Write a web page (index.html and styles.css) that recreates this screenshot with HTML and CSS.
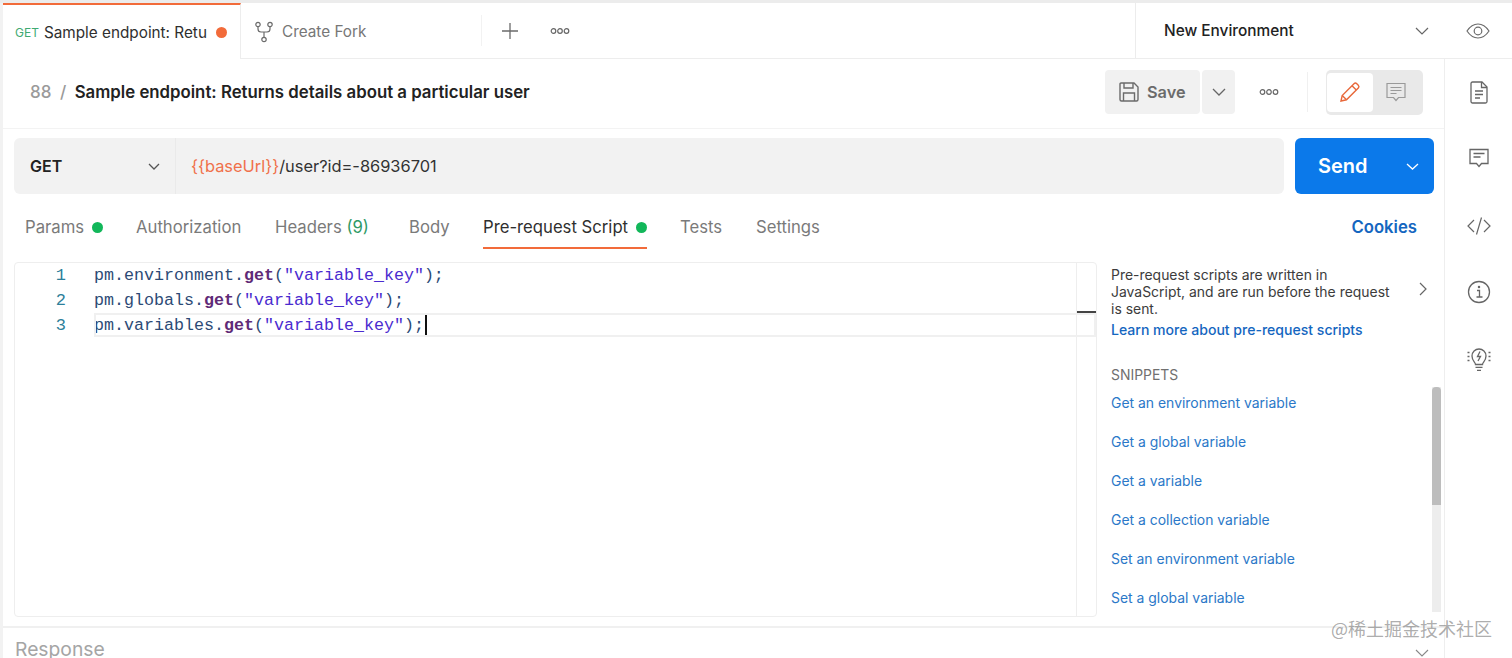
FILE: index.html
```html
<!DOCTYPE html>
<html lang="en">
<head>
<meta charset="utf-8">
<title>Sample endpoint</title>
<link rel="stylesheet" href="styles.css">
</head>
<body>
<div class="app">
  <main class="main">
    <div class="tabbar">
      <div class="tab active"><span class="get">GET</span><span class="tab-name">Sample endpoint: Retu</span><span class="unsaved"></span></div>
      <div class="tab fork">
        <svg class="ico" width="20" height="22" viewBox="0 0 20 22" fill="none" stroke="#6b6b6b" stroke-width="1.2"><circle cx="4" cy="3.5" r="2.2"/><circle cx="16" cy="3.5" r="2.2"/><circle cx="10" cy="18.5" r="2.2"/><path d="M4 5.7V8c0 2 1.5 3 3 3h6c1.5 0 3-1 3-3V5.7M10 11v5.3"/></svg>
        <span>Create Fork</span>
      </div>
      <div class="tab-actions">
        <svg width="18" height="18" viewBox="0 0 18 18" stroke="#6b6b6b" stroke-width="1.3"><path d="M9 1v16M1 9h16"/></svg>
        <svg class="dots" width="20" height="8" viewBox="0 0 20 8" fill="none" stroke="#666" stroke-width="1.2"><circle cx="3.5" cy="4" r="2.3"/><circle cx="10" cy="4" r="2.3"/><circle cx="16.5" cy="4" r="2.3"/></svg>
      </div>
      <div class="env">
        <span>New Environment</span>
        <svg width="14" height="8" viewBox="0 0 14 8" fill="none" stroke="#666" stroke-width="1.2"><path d="M1 1l6 6 6-6"/></svg>
      </div>
    </div>

    <div class="header">
      <div class="crumbs"><span class="crumb-dim">88</span><span class="crumb-dim slash">/</span><span class="crumb-title">Sample endpoint: Returns details about a particular user</span></div>
      <div class="header-actions">
        <div class="save">
          <svg width="22" height="22" viewBox="0 0 22 22" fill="none" stroke="#6b6b6b" stroke-width="1.4"><path d="M3 2h13l4 4v12.500a1.500 1.500 0 0 1-1.500 1.500h-15A1.500 1.500 0 0 1 2 18.500V3a1 1 0 0 1 1-1z"/><path d="M6 2v5h9V2M5.500 20v-8h11v8"/></svg>
          <span>Save</span>
        </div>
        <div class="save-more"><svg width="14" height="8" viewBox="0 0 14 8" fill="none" stroke="#666" stroke-width="1.3"><path d="M1 1l6 6 6-6"/></svg></div>
        <svg class="dots head-dots" width="20" height="8" viewBox="0 0 20 8" fill="none" stroke="#666" stroke-width="1.2"><circle cx="3.5" cy="4" r="2.3"/><circle cx="10" cy="4" r="2.3"/><circle cx="16.5" cy="4" r="2.3"/></svg>
        <div class="head-divider"></div>
        <div class="mode">
          <div class="mode-on"><svg width="22" height="22" viewBox="0 0 22 22" fill="none" stroke="#e8683a" stroke-width="1.4"><path d="M2 20l1.200-5.500L15 2.700a2 2 0 0 1 2.800 0l1.500 1.500a2 2 0 0 1 0 2.800L7.500 18.800z"/><path d="M13 4.700l4.300 4.300M3.200 14.500l4.300 4.300"/></svg></div>
          <div class="mode-off"><svg width="20" height="20" viewBox="0 0 20 20" fill="none" stroke="#9a9a9a" stroke-width="1.2"><path d="M1 1.500h18v14h-6.500L10 18.500 7.500 15.500H1z"/><path d="M4.500 5.500h11M4.500 8.500h11M4.500 11.500h6"/></svg></div>
        </div>
      </div>
    </div>

    <div class="urlrow">
      <div class="url">
        <div class="method"><span>GET</span><svg width="12" height="7" viewBox="0 0 12 7" fill="none" stroke="#555" stroke-width="1.3"><path d="M1 1l5 5 5-5"/></svg></div>
        <div class="url-text"><span class="var">{{baseUrl}}</span>/user?id=-86936701</div>
      </div>
      <div class="send"><span>Send</span><svg width="13" height="7" viewBox="0 0 13 7" fill="none" stroke="#fff" stroke-width="1.3"><path d="M1 1l5.500 5 5.500-5"/></svg></div>
    </div>

    <nav class="reqtabs">
      <div class="rt rt-params">Params<i class="dot"></i></div>
      <div class="rt rt-auth">Authorization</div>
      <div class="rt rt-headers">Headers <span class="count">(9)</span></div>
      <div class="rt rt-body">Body</div>
      <div class="rt rt-pre">Pre-request Script<i class="dot"></i></div>
      <div class="rt rt-tests">Tests</div>
      <div class="rt rt-settings">Settings</div>
      <div class="cookies">Cookies</div>
    </nav>

    <div class="work">
      <div class="editor">
        <div class="lines">
          <div class="line"><span class="ln">1</span><code class="code">pm.environment.<b>get</b>(<span class="str">"variable_key"</span>);</code></div>
          <div class="line"><span class="ln">2</span><code class="code">pm.globals.<b>get</b>(<span class="str">"variable_key"</span>);</code></div>
          <div class="line"><span class="ln">3</span><code class="code">pm.variables.<b>get</b>(<span class="str">"variable_key"</span>);<span class="caret"></span></code></div>
        </div>
        <div class="minimap"><div class="mini-mark"></div></div>
        <div class="current-box"></div>
      </div>
      <aside class="help">
        <div class="help-top">
          <p class="help-text">Pre-request scripts are written in JavaScript, and are run before the request is sent.</p>
          <svg class="help-chev" width="8" height="14" viewBox="0 0 8 14" fill="none" stroke="#666" stroke-width="1.2"><path d="M1 1l6 6-6 6"/></svg>
        </div>
        <div class="learn">Learn more about pre-request scripts</div>
        <div class="snip-head">SNIPPETS</div>
        <div class="snippets">
          <div>Get an environment variable</div>
          <div>Get a global variable</div>
          <div>Get a variable</div>
          <div>Get a collection variable</div>
          <div>Set an environment variable</div>
          <div>Set a global variable</div>
        </div>
        <div class="scrollbar"><div class="thumb"></div></div>
      </aside>
    </div>

    <div class="response">
      <span>Response</span>
      <svg width="14" height="8" viewBox="0 0 14 8" fill="none" stroke="#888" stroke-width="1.1"><path d="M1 1l6 6 6-6"/></svg>
    </div>
  </main>

  <aside class="rail">
    <div class="rail-top">
      <svg width="24" height="16" viewBox="0 0 24 16" fill="none" stroke="#6b6b6b" stroke-width="1.2"><path d="M1 8c3-4.500 7-7 11-7s8 2.500 11 7c-3 4.500-7 7-11 7S4 12.500 1 8z"/><circle cx="12" cy="8" r="3.800"/></svg>
    </div>
    <div class="rail-body">
      <svg class="r-doc" width="18" height="23" viewBox="0 0 18 23" fill="none" stroke="#666" stroke-width="1.3"><path d="M2.500 1H12l5 5v14.500a1.500 1.500 0 0 1-1.500 1.500h-13A1.500 1.500 0 0 1 1 20.500v-18A1.500 1.500 0 0 1 2.500 1z"/><path d="M11.500 1v5.500H17M5 10h8M5 13.500h8M5 17h5"/></svg>
      <svg class="r-cmt" width="20" height="20" viewBox="0 0 20 20" fill="none" stroke="#666" stroke-width="1.3"><path d="M1 1.500h18v14h-6.500L10 18.500 7.500 15.500H1z"/><path d="M4.500 5.500h11M4.500 9h7"/></svg>
      <svg class="r-code" width="24" height="18" viewBox="0 0 24 18" fill="none" stroke="#666" stroke-width="1.2"><path d="M7 3L1 9l6 6M17 3l6 6-6 6M14.500 0.500L9.500 17.500"/></svg>
      <svg class="r-info" width="24" height="24" viewBox="0 0 24 24" fill="none" stroke="#666" stroke-width="1.3"><circle cx="12" cy="12" r="10.500"/><path d="M10 10.500h2.500V17M9.500 17h6"/><circle cx="12" cy="7" r="0.600"/></svg>
      <svg class="r-bulb" width="24" height="24" viewBox="0 0 24 24" fill="none" stroke="#666" stroke-width="1.3"><path d="M8.500 17.500c0-2.500-3.500-3.500-3.500-8.500a7 7 0 0 1 14 0c0 5-3.500 6-3.500 8.500z"/><path d="M8.500 20.300h7M10 23.300h4M13 4.500l-2.500 5h3L11 14M0.500 5.500h2M0.500 9.500h2M0.500 13.500h2M21.500 5.500h2M21.500 9.500h2M21.500 13.500h2"/></svg>
    </div>
  </aside>
</div>
<div class="watermark">@稀土掘金技术社区</div>
</body>
</html>
```
FILE: styles.css
```css
* { box-sizing: border-box; }
html, body { margin: 0; height: 658px; overflow: hidden; background: #fff; }
body { font-family: Inter, "Noto Sans", sans-serif; color: #212121; position: relative; }
.app { display: flex; height: 658px; border-top: 3px solid #ececec; }
.main { width: 1444px; flex: none; display: flex; flex-direction: column; border-left: 3px solid #f2f2f2; }

.tabbar { height: 56px; display: flex; align-items: stretch; flex: none; border-bottom: 1px solid #ededed; }
.tab { display: flex; align-items: center; font-size: 15.3px; flex: none; }
.tab.active { width: 238px; border-top: 2px solid #f26b3a; border-right: 1px solid #ededed; padding: 0 0 0 12px; margin-bottom: -1px; background: #fff; color: #2f2f2f; }
.get { color: #3faa72; font-size: 12px; margin-right: 5px; }
.tab-name { white-space: nowrap; }
.unsaved { width: 11px; height: 11px; border-radius: 50%; background: #f26b3a; margin-left: 9px; flex: none; }
.fork { width: 241px; padding: 2px 0 0 13px; color: #777; gap: 8px; border-right: 1px solid #f2f2f2; margin: 12px 0; }
.tab-actions { display: flex; align-items: center; gap: 31px; padding-left: 19px; width: 654px; border-right: 1px solid #ececec; }
.env { flex: 1; display: flex; align-items: center; justify-content: space-between; padding: 0 15px 0 28px; font-size: 15.4px; font-weight: 500; color: #222; }

.header { height: 70px; flex: none; display: flex; align-items: center; justify-content: space-between; border-bottom: 1px solid #f3f3f3; padding: 0 21px 3px 27px; }
.crumbs { display: flex; align-items: center; font-size: 17px; }
.crumb-dim { color: #9a9a9a; font-weight: 500; }
.slash { margin: 0 8.5px; }
.crumb-title { font-weight: 600; color: #222; font-size: 16.8px; }
.header-actions { display: flex; align-items: center; }
.save { width: 95px; height: 44px; background: #f1f1f1; border-radius: 4px; display: flex; align-items: center; gap: 7px; padding-left: 13px; font-size: 16.3px; font-weight: 600; color: #6b6b6b; }
.save-more { width: 33px; height: 44px; margin-left: 2px; background: #f1f1f1; border-radius: 4px; display: flex; align-items: center; justify-content: center; }
.head-dots { margin: 0 28px 0 24px; }
.head-divider { width: 1px; height: 40px; background: #f0f0f0; margin-right: 18px; }
.mode { width: 97px; height: 45px; background: #e9e9e9; border-radius: 5px; display: flex; align-items: center; padding: 3px 3px 3px 1px; }
.mode-on { width: 46px; height: 39px; background: #fff; border-radius: 4px; display: flex; align-items: center; justify-content: center; }
.mode-off { flex: 1; display: flex; align-items: center; justify-content: center; padding-right: 2px; }

.urlrow { display: flex; flex: none; gap: 11px; margin: 9px 10px 0 11px; height: 56px; }
.url { flex: 1; display: flex; background: #f2f2f2; border-radius: 6px; }
.method { width: 162px; flex: none; display: flex; align-items: center; justify-content: space-between; padding: 0 15px 0 16px; font-size: 16px; font-weight: 600; border-right: 1px solid #eaeaea; color: #222; }
.url-text { padding-left: 15px; display: flex; align-items: center; font-size: 16.4px; color: #333; }
.var { color: #f0704a; }
.send { width: 139px; flex: none; background: #0b79ea; color: #fff; border-radius: 6px; display: flex; align-items: center; justify-content: space-between; padding: 0 15px 0 23px; font-size: 20px; font-weight: 600; }

.reqtabs { height: 56px; flex: none; display: flex; align-items: center; font-size: 16.7px; color: #7a7a7a; padding: 10px 27px 0 0; }
.rt { flex: none; height: 100%; display: flex; align-items: center; position: relative; }
.rt-params { margin-left: 22px; width: 111px; }
.rt-auth { width: 139px; }
.rt-headers { width: 134px; white-space: pre; }
.rt-body { width: 74px; }
.rt-pre { width: 197px; color: #2f2f2f; }
.rt-pre::after { content: ""; position: absolute; left: 0; bottom: 1px; width: 164px; height: 2.5px; background: #f26b3a; }
.rt-tests { width: 76px; }
.count { color: #2f9a66; }
.dot { width: 11px; height: 11px; border-radius: 50%; background: #12b75a; margin-left: 8px; }
.cookies { margin-left: auto; font-weight: 600; color: #1466c0; }

.work { flex: none; height: 364px; margin-top: 12px; display: flex; padding-left: 11px; }
.editor { width: 1083px; height: 355px; border: 1px solid #eee; border-radius: 4px; position: relative; display: flex; }
.lines { flex: 1; }
.line { height: 25px; display: flex; align-items: center; }
.ln { width: 79px; flex: none; padding-right: 28px; text-align: right; font: 17px "Liberation Mono", monospace; color: #2d7f9a; }
.code { font: 16.67px/25px "Liberation Mono", monospace; color: #2c4a75; white-space: pre; flex: 1; }
.code b { color: #5f2a77; }
.str { color: #4a2bcf; }
.caret { display: inline-block; width: 2px; height: 24px; background: #111; vertical-align: top; margin-left: 1px; }
.minimap { width: 20px; flex: none; border-left: 1px solid #eee; position: relative; }
.mini-mark { position: absolute; top: 48px; left: 0; width: 19px; height: 2px; background: #444; }
.current-box { position: absolute; left: 79px; right: 0; top: 50px; height: 24px; border: 2px solid #f0f0f0; pointer-events: none; }

.help { flex: 1; position: relative; padding: 4px 0 0 14px; font-size: 13.95px; }
.help-top { display: flex; align-items: center; justify-content: space-between; padding-right: 17px; }
.help-text { margin: 0; width: 290px; line-height: 17px; color: #3c3c3c; }
.help-chev { margin-bottom: 6px; }
.learn { color: #1466c0; font-weight: 500; margin-top: 4px; line-height: 17px; font-size: 14.05px; }
.snip-head { color: #707070; margin-top: 28px; line-height: 17px; }
.snippets { color: #2b78c8; }
.snippets div { height: 39px; display: flex; align-items: center; }
.scrollbar { position: absolute; top: 125px; right: 3px; width: 9px; height: 225px; background: #ededed; }
.thumb { width: 9px; height: 118px; background: #bdbdbd; border-radius: 4px 4px 0 0; }

.response { flex: 1; border-top: 2px solid #f0f0f0; display: flex; align-items: flex-start; justify-content: space-between; padding: 9px 15px 0 12px; font-size: 19.3px; color: #a5a5a5; overflow: hidden; }
.response svg { margin-top: 12px; }

.rail { flex: 1; display: flex; flex-direction: column; }
.rail-top { height: 56px; flex: none; border-bottom: 1px solid #ededed; display: flex; align-items: center; justify-content: center; }
.rail-body { flex: 1; border-left: 1px solid #eee; display: flex; flex-direction: column; align-items: center; padding-top: 22px; }
.r-cmt { margin-top: 44px; }
.r-code { margin-top: 49px; }
.r-info { margin-top: 45px; }
.r-bulb { margin-top: 43px; }

.watermark { position: absolute; right: 20px; top: 615px; font-family: "Noto Sans CJK SC", sans-serif; font-size: 18px; color: rgba(120,120,120,.62); }
```
